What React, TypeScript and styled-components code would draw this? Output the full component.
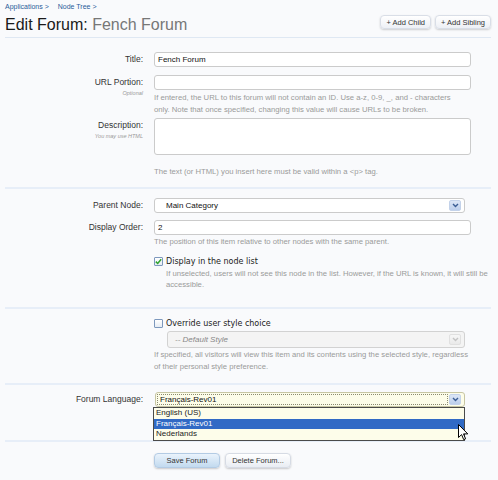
import React from "react";
import styled, { createGlobalStyle } from "styled-components";

const GlobalStyle = createGlobalStyle`
  html, body { margin: 0; padding: 0; background: #f9fafc; }
  body { font-family: "Liberation Sans", Arial, sans-serif; color: #333; }
  * { box-sizing: border-box; }
`;

const Page = styled.div`
  position: relative;
  width: 498px;
  height: 480px;
  overflow: hidden;
  background: #f9fafc;
  padding: 0 7px 0 5px;
`;

const Breadcrumb = styled.nav`
  display: flex;
  gap: 9px;
  height: 12px;
  align-items: center;
  font-size: 7px;
  color: #2b5c9a;
`;

const Header = styled.header`
  display: flex;
  justify-content: space-between;
  align-items: center;
  height: 26px;
  border-bottom: 1px solid #dfe8f3;
`;

const Title = styled.h1`
  margin: 0;
  font-size: 16px;
  line-height: 18px;
  font-weight: normal;
  color: #1a1a1a;
`;

const Sub = styled.span`
  color: #777;
`;

const TopActions = styled.div`
  display: flex;
  gap: 4px;
  align-self: flex-start;
  margin-top: 3px;
`;

const TopButton = styled.button`
  height: 14px;
  padding: 0 5px;
  font-family: "Liberation Sans", Arial, sans-serif;
  font-size: 7.5px;
  color: #333;
  border: 1px solid #d9dee7;
  border-radius: 4px;
  background: linear-gradient(#ffffff, #edf0f5);
  box-shadow: 0 1px 2px rgba(0, 0, 0, 0.18);
`;

const Section = styled.section<{ $pt: number; $pb: number; $line?: boolean }>`
  display: flex;
  flex-direction: column;
  padding-top: ${(p) => p.$pt}px;
  padding-bottom: ${(p) => p.$pb}px;
  border-bottom: ${(p) => (p.$line ? "2px solid #e7eef8" : "none")};
`;

const Row = styled.div<{ $mb?: number }>`
  display: grid;
  grid-template-columns: 138px 330px;
  column-gap: 11px;
  margin-bottom: ${(p) => p.$mb ?? 0}px;
`;

const LabelCol = styled.div`
  display: flex;
  flex-direction: column;
  align-items: flex-end;
`;

const Label = styled.label`
  font-size: 8.5px;
  line-height: 15px;
  color: #333;
`;

const LabelNote = styled.span`
  font-size: 5.5px;
  line-height: 6px;
  font-style: italic;
  color: #999;
`;

const Control = styled.div`
  display: flex;
  flex-direction: column;
  position: relative;
`;

const TextInput = styled.input`
  width: 317px;
  height: 15px;
  padding: 0 3px;
  border: 1px solid #cbcbcb;
  border-radius: 3px;
  background: #fff;
  font-family: "Liberation Sans", Arial, sans-serif;
  font-size: 8px;
  color: #111;
  outline: none;
`;

const TextArea = styled.textarea`
  width: 317px;
  height: 37px;
  border: 1px solid #cbcbcb;
  border-radius: 3px;
  background: #fff;
  resize: none;
  outline: none;
`;

const Hint = styled.p<{ $mt?: number; $lh?: number; $indent?: number; $w?: number }>`
  width: ${(p) => p.$w ?? 317}px;
  margin: ${(p) => p.$mt ?? 1}px 0 0 ${(p) => p.$indent ?? 0}px;
  font-size: 7.7px;
  line-height: ${(p) => p.$lh ?? 11.5}px;
  color: #9a9a9a;
`;

const SelectBox = styled.div<{ $w: number; $h: number; $ml?: number; $mt?: number; $tone: "normal" | "disabled" | "focus" }>`
  width: ${(p) => p.$w}px;
  height: ${(p) => p.$h}px;
  margin: ${(p) => p.$mt ?? 0}px 0 0 ${(p) => p.$ml ?? 0}px;
  display: flex;
  align-items: center;
  padding: 1px;
  border: 1px solid ${(p) => (p.$tone === "focus" ? "#c7c6a3" : p.$tone === "disabled" ? "#d2d2d2" : "#cbcbcb")};
  border-radius: 3px;
  background: ${(p) => (p.$tone === "focus" ? "#fdfde9" : p.$tone === "disabled" ? "#f4f4f4" : "#fff")};
  font-size: 8px;
  color: ${(p) => (p.$tone === "disabled" ? "#888" : "#111")};
  font-style: ${(p) => (p.$tone === "disabled" ? "italic" : "normal")};
`;

const SelectText = styled.span<{ $pl: number; $focus?: boolean }>`
  flex: 1;
  align-self: stretch;
  display: flex;
  align-items: center;
  padding-left: ${(p) => p.$pl}px;
  border: 1px dotted ${(p) => (p.$focus ? "#8a8a70" : "transparent")};
  margin-right: 1px;
`;

const ArrowButton = styled.span<{ $disabled?: boolean }>`
  width: 12px;
  height: 11px;
  margin-right: 2px;
  display: flex;
  align-items: center;
  justify-content: center;
  border-radius: 2px;
  background: ${(p) => (p.$disabled ? "linear-gradient(#f7f7f7, #e9e9e9)" : "linear-gradient(#dce6f6, #bccfec)")};
  border: 1px solid ${(p) => (p.$disabled ? "#e0e0e0" : "#c3d2ea")};
  color: ${(p) => (p.$disabled ? "#c4c4c4" : "#3a5d94")};
`;

const CheckRow = styled.label<{ $lh: number; $mt?: number }>`
  display: flex;
  align-items: center;
  gap: 3px;
  height: ${(p) => p.$lh}px;
  margin-top: ${(p) => p.$mt ?? 0}px;
  font-family: "DejaVu Sans", Verdana, sans-serif;
  font-size: 8px;
  color: #222;
`;

const CheckBox = styled.span`
  width: 9px;
  height: 9px;
  display: flex;
  align-items: center;
  justify-content: center;
  border: 1px solid #7d98bd;
  border-radius: 1px;
  background: linear-gradient(#ffffff, #e6ecf4);
`;

const Dropdown = styled.ul`
  position: absolute;
  top: 15px;
  left: -1px;
  width: 312px;
  margin: 0;
  padding: 0;
  list-style: none;
  background: #fdfdea;
  border: 1px solid #4a4a4a;
  z-index: 2;
`;

const Option = styled.li<{ $active?: boolean }>`
  height: 10.5px;
  line-height: 10.5px;
  padding-left: 2px;
  font-size: 8px;
  color: ${(p) => (p.$active ? "#fff" : "#222")};
  background: ${(p) => (p.$active ? "#316ac5" : "transparent")};
`;

const Actions = styled.div`
  display: flex;
  gap: 5px;
`;

const FormButton = styled.button<{ $primary?: boolean }>`
  min-width: 66px;
  height: 15px;
  padding: 0 5px;
  font-family: "Liberation Sans", Arial, sans-serif;
  font-size: 7.5px;
  color: #333;
  border-radius: 4px;
  border: 1px solid ${(p) => (p.$primary ? "#b3cbe4" : "#d6dbe4")};
  background: ${(p) => (p.$primary ? "linear-gradient(#eaf3fc, #c2daef)" : "linear-gradient(#ffffff, #e9edf3)")};
  box-shadow: 0 1px 2px rgba(0, 0, 0, 0.2);
`;

const Cursor = styled.svg`
  position: absolute;
  left: 458px;
  top: 424px;
  z-index: 3;
`;

const Chevron = () => (
  <svg width="7" height="5" viewBox="0 0 7 5">
    <path d="M1 1 L3.5 3.5 L6 1" fill="none" stroke="currentColor" strokeWidth="1.4" />
  </svg>
);

const Tick = () => (
  <svg width="7" height="7" viewBox="0 0 7 7">
    <path d="M0.8 3.6 L2.7 5.5 L6.2 1.2" fill="none" stroke="#2fa32f" strokeWidth="1.5" />
  </svg>
);

export default function App() {
  return (
    <Page>
      <GlobalStyle />
      <Breadcrumb>
        <span>Applications &gt;</span>
        <span>Node Tree &gt;</span>
      </Breadcrumb>
      <Header>
        <Title>
          Edit Forum: <Sub>Fench Forum</Sub>
        </Title>
        <TopActions>
          <TopButton>+ Add Child</TopButton>
          <TopButton>+ Add Sibling</TopButton>
        </TopActions>
      </Header>

      <Section $pt={14} $pb={9} $line>
        <Row $mb={8}>
          <LabelCol>
            <Label>Title:</Label>
          </LabelCol>
          <Control>
            <TextInput readOnly value="Fench Forum" />
          </Control>
        </Row>
        <Row $mb={3}>
          <LabelCol>
            <Label>URL Portion:</Label>
            <LabelNote>Optional</LabelNote>
          </LabelCol>
          <Control>
            <TextInput readOnly value="" />
            <Hint $mt={2} $w={305}>
              If entered, the URL to this forum will not contain an ID. Use a-z, 0-9, _, and - characters only. Note
              that once specified, changing this value will cause URLs to be broken.
            </Hint>
          </Control>
        </Row>
        <Row>
          <LabelCol>
            <Label>Description:</Label>
            <LabelNote>You may use HTML</LabelNote>
          </LabelCol>
          <Control>
            <TextArea readOnly value="" />
            <Hint $mt={11} $lh={12}>
              The text (or HTML) you insert here must be valid within a &lt;p&gt; tag.
            </Hint>
          </Control>
        </Row>
      </Section>

      <Section $pt={9} $pb={17} $line>
        <Row $mb={7}>
          <LabelCol>
            <Label>Parent Node:</Label>
          </LabelCol>
          <Control>
            <SelectBox $w={311} $h={15} $tone="normal">
              <SelectText $pl={9}>Main Category</SelectText>
              <ArrowButton>
                <Chevron />
              </ArrowButton>
            </SelectBox>
          </Control>
        </Row>
        <Row $mb={8}>
          <LabelCol>
            <Label>Display Order:</Label>
          </LabelCol>
          <Control>
            <TextInput readOnly value="2" />
            <Hint $mt={1} $lh={11}>
              The position of this item relative to other nodes with the same parent.
            </Hint>
          </Control>
        </Row>
        <Row>
          <LabelCol />
          <Control>
            <CheckRow $lh={13}>
              <CheckBox>
                <Tick />
              </CheckBox>
              Display in the node list
            </CheckRow>
            <Hint $mt={0} $lh={11} $indent={12} $w={326}>
              If unselected, users will not see this node in the list. However, if the URL is known, it will still be
              accessible.
            </Hint>
          </Control>
        </Row>
      </Section>

      <Section $pt={8} $pb={11} $line>
        <Row>
          <LabelCol />
          <Control>
            <CheckRow $lh={12}>
              <CheckBox />
              Override user style choice
            </CheckRow>
            <SelectBox $w={298} $h={17} $ml={13} $mt={2} $tone="disabled">
              <SelectText $pl={5}>-- Default Style</SelectText>
              <ArrowButton $disabled>
                <Chevron />
              </ArrowButton>
            </SelectBox>
            <Hint $mt={1} $lh={11.5}>
              If specified, all visitors will view this item and its contents using the selected style, regardless of
              their personal style preference.
            </Hint>
          </Control>
        </Row>
      </Section>

      <Section $pt={7} $pb={33} $line>
        <Row>
          <LabelCol>
            <Label>Forum Language:</Label>
          </LabelCol>
          <Control>
            <SelectBox $w={310} $h={15} $ml={1} $tone="focus">
              <SelectText $pl={2} $focus>
                Français-Rev01
              </SelectText>
              <ArrowButton>
                <Chevron />
              </ArrowButton>
            </SelectBox>
            <Dropdown>
              <Option>English (US)</Option>
              <Option $active>Français-Rev01</Option>
              <Option>Nederlands</Option>
            </Dropdown>
          </Control>
        </Row>
      </Section>

      <Section $pt={11} $pb={0}>
        <Row>
          <LabelCol />
          <Actions>
            <FormButton $primary>Save Forum</FormButton>
            <FormButton>Delete Forum...</FormButton>
          </Actions>
        </Row>
      </Section>

      <Cursor width="11" height="17" viewBox="0 0 11 17">
        <path
          d="M0.5 0.5 L0.5 13.5 L3.6 10.6 L5.7 15.6 L7.6 14.8 L5.5 9.9 L9.8 9.9 Z"
          fill="#fff"
          stroke="#000"
          strokeWidth="1"
          strokeLinejoin="round"
        />
      </Cursor>
    </Page>
  );
}
